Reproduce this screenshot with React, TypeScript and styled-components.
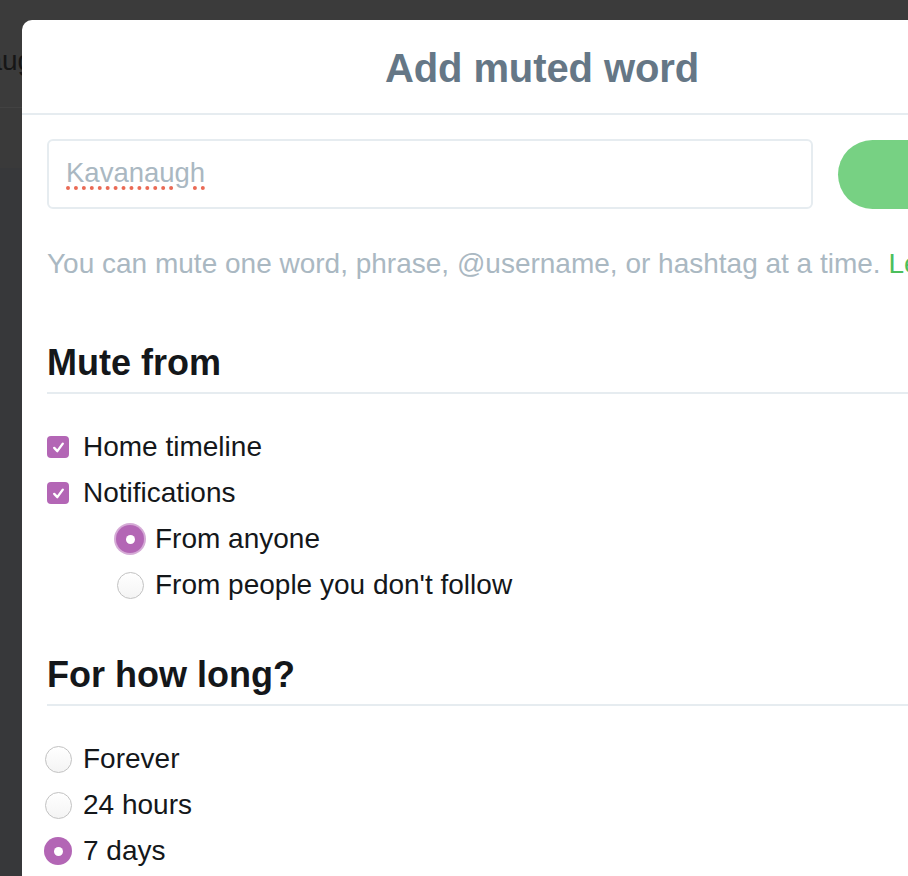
import React from "react";
import styled, { createGlobalStyle } from "styled-components";

const Global = createGlobalStyle`
  html, body { margin: 0; padding: 0; }
  body {
    background: #37383a;
    overflow: hidden;
    font-family: "Liberation Sans", Arial, sans-serif;
    width: 908px;
    height: 876px;
  }
`;

const Page = styled.div`
  width: 908px;
  height: 876px;
  display: flex;
  flex-direction: column;
`;

const TopBar = styled.div`
  height: 107px;
  background: #3b3b3b;
  border-bottom: 1px solid #424242;
  display: flex;
  align-items: center;
  overflow: hidden;
`;

const SearchText = styled.span`
  font-size: 28px;
  color: #161616;
  margin-left: -93px;
  margin-top: 14px;
  white-space: nowrap;
`;

const SubBar = styled.div`
  height: 60px;
  background: #3a3a3a;
`;

const Rest = styled.div`
  flex: 1;
  background: #37383a;
`;

const Modal = styled.div`
  position: fixed;
  left: 22px;
  top: 20px;
  width: 1040px;
  height: 900px;
  background: #fff;
  border-radius: 10px 10px 0 0;
  display: flex;
  flex-direction: column;
`;

const Header = styled.div`
  height: 93px;
  border-bottom: 2px solid #e6ecf0;
  display: flex;
  align-items: center;
  justify-content: center;
`;

const Title = styled.h1`
  margin: 4px 0 0;
  font-size: 40px;
  font-weight: 700;
  color: #657786;
  letter-spacing: -0.1px;
`;

const Body = styled.div`
  padding: 0 25px;
  display: flex;
  flex-direction: column;
`;

const InputRow = styled.div`
  margin-top: 24px;
  display: flex;
  align-items: center;
  gap: 25px;
`;

const InputBox = styled.div`
  width: 766px;
  height: 70px;
  flex-shrink: 0;
  box-sizing: border-box;
  border: 2px solid #e6ecf0;
  border-radius: 6px;
  display: flex;
  align-items: center;
  padding-left: 17px;
`;

const InputValue = styled.span`
  font-size: 27.5px;
  color: #aab8c2;
  text-decoration: underline dotted #ea6a55;
  text-decoration-thickness: 4px;
  text-underline-offset: 4px;
  margin-top: -2px;
`;

const SaveButton = styled.div`
  width: 240px;
  height: 69px;
  border-radius: 35px;
  background: #77d183;
  flex-shrink: 0;
`;

const Helper = styled.p`
  margin: 39px 0 0;
  font-size: 28px;
  line-height: 32px;
  color: #aab8c2;
  white-space: nowrap;
`;

const Link = styled.span`
  color: #4bbf5c;
`;

const SectionHeading = styled.h2<{ $top: number }>`
  margin: ${(p) => p.$top}px 0 0;
  font-size: 36px;
  line-height: 44px;
  font-weight: 700;
  color: #14171a;
  padding-bottom: 7px;
  border-bottom: 2px solid #e6ecf0;
`;

const OptionList = styled.div`
  margin-top: 30px;
  display: flex;
  flex-direction: column;
`;

const Option = styled.label<{ $indent?: boolean }>`
  height: 46px;
  display: flex;
  align-items: center;
  gap: 11px;
  padding-left: ${(p) => (p.$indent ? 72 : 0)}px;
  margin-left: -3px;
  font-size: 28px;
  color: #14171a;
`;

const Slot = styled.span`
  width: 28px;
  height: 28px;
  display: flex;
  align-items: center;
  justify-content: center;
  flex-shrink: 0;
`;

const CheckBox = styled.span`
  width: 22px;
  height: 22px;
  border-radius: 4px;
  background: #b366b5;
  display: flex;
  align-items: center;
  justify-content: center;
`;

const Radio = styled.span<{ $on?: boolean; $focus?: boolean }>`
  box-sizing: border-box;
  width: ${(p) => (p.$on ? 28 : 27)}px;
  height: ${(p) => (p.$on ? 28 : 27)}px;
  border-radius: 50%;
  display: flex;
  align-items: center;
  justify-content: center;
  background: ${(p) =>
    p.$on ? "#b366b5" : "linear-gradient(#ffffff, #f4f4f4)"};
  border: ${(p) => (p.$on ? "none" : "1.5px solid #c2c2c2")};
  box-shadow: ${(p) =>
    p.$focus ? "0 0 0 2px rgba(179, 102, 181, 0.55)" : "none"};
  &::after {
    content: "";
    display: ${(p) => (p.$on ? "block" : "none")};
    width: 9px;
    height: 9px;
    border-radius: 50%;
    background: #fff;
  }
`;

const Check = () => (
  <svg width="15" height="15" viewBox="0 0 14 14">
    <path
      d="M3 7.4 L5.9 10.4 L11 3.4"
      fill="none"
      stroke="#fff"
      strokeWidth="2.2"
      strokeLinecap="round"
      strokeLinejoin="round"
    />
  </svg>
);

export default function App() {
  return (
    <>
      <Global />
      <Page>
        <TopBar>
          <SearchText>Kavanaugh</SearchText>
        </TopBar>
        <SubBar />
        <Rest />
      </Page>
      <Modal>
        <Header>
          <Title>Add muted word</Title>
        </Header>
        <Body>
          <InputRow>
            <InputBox>
              <InputValue>Kavanaugh</InputValue>
            </InputBox>
            <SaveButton />
          </InputRow>
          <Helper>
            You can mute one word, phrase, @username, or hashtag at a time.{" "}
            <Link>Learn more</Link>
          </Helper>
          <SectionHeading $top={61}>Mute from</SectionHeading>
          <OptionList>
            <Option>
              <Slot>
                <CheckBox>
                  <Check />
                </CheckBox>
              </Slot>
              Home timeline
            </Option>
            <Option>
              <Slot>
                <CheckBox>
                  <Check />
                </CheckBox>
              </Slot>
              Notifications
            </Option>
            <Option $indent>
              <Slot>
                <Radio $on $focus />
              </Slot>
              From anyone
            </Option>
            <Option $indent>
              <Slot>
                <Radio />
              </Slot>
              From people you don't follow
            </Option>
          </OptionList>
          <SectionHeading $top={45}>For how long?</SectionHeading>
          <OptionList>
            <Option>
              <Slot>
                <Radio />
              </Slot>
              Forever
            </Option>
            <Option>
              <Slot>
                <Radio />
              </Slot>
              24 hours
            </Option>
            <Option>
              <Slot>
                <Radio $on />
              </Slot>
              7 days
            </Option>
          </OptionList>
        </Body>
      </Modal>
    </>
  );
}
